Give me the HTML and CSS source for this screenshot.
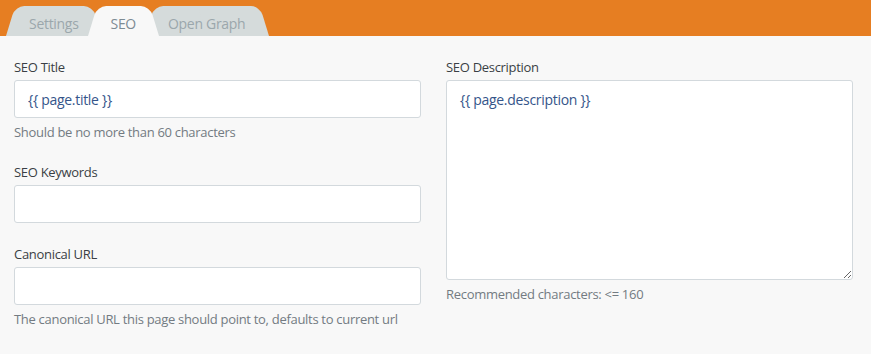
FILE: index.html
```html
<!DOCTYPE html>
<html lang="en">
<head>
    <meta charset="UTF-8">
    <title>SEO</title>
    <link rel="stylesheet" href="styles.css">
</head>
<body>
    <div class="tabs-bar">
        <div class="tab">Settings</div>
        <div class="tab active">SEO</div>
        <div class="tab">Open Graph</div>
    </div>

    <div class="form">
        <div class="column">
            <div class="form-group">
                <label>SEO Title</label>
                <input type="text" value="{{ page.title }}">
                <p class="help">Should be no more than 60 characters</p>
            </div>
            <div class="form-group">
                <label>SEO Keywords</label>
                <input type="text" value="">
            </div>
            <div class="form-group">
                <label>Canonical URL</label>
                <input type="text" value="">
                <p class="help">The canonical URL this page should point to, defaults to current url</p>
            </div>
        </div>
        <div class="column">
            <div class="form-group">
                <label>SEO Description</label>
                <textarea>{{ page.description }}</textarea>
                <p class="help">Recommended characters: &lt;= 160</p>
            </div>
        </div>

        <!-- next row, cut off by the window -->
        <div class="form-group">
            <label class="indent">Robots index</label>
        </div>
        <div class="form-group">
            <label class="indent">Robots follow</label>
        </div>
    </div>
</body>
</html>
```

FILE: styles.css
```css
body {
    font-family: 'Open Sans', 'Noto Sans', sans-serif;
    font-size: 13px;
    letter-spacing: -0.3px;
    margin: 0;
    padding: 0;
    background-color: #f8f8f8;
    color: #3a3f45;
}

/* tabs */
.tabs-bar {
    display: flex;
    align-items: flex-end;
    height: 36px;
    padding-left: 6px;
    background-color: #e67e22;
}

.tab {
    position: relative;
    z-index: 1;
    height: 30px;
    line-height: 36px;
    padding: 0 23px;
    margin-left: -14px;
    font-size: 14px;
    color: #9ba7ac;
    cursor: pointer;
}

.tab:first-child {
    margin-left: 0;
}

.tab::before,
.tab::after {
    content: '';
    position: absolute;
    z-index: -1;
    top: 0;
    bottom: 0;
    width: 50%;
    background-color: #d5dbdb;
    transform-origin: bottom;
}

.tab::before {
    left: 0;
    border-top-left-radius: 9px;
    transform: skewX(-17deg);
}

.tab::after {
    right: 0;
    border-top-right-radius: 9px;
    transform: skewX(17deg);
}

.tab.active {
    z-index: 2;
    color: #7d8b94;
}

.tab.active::before,
.tab.active::after {
    background-color: #f8f8f8;
}

/* form */
.form {
    display: grid;
    grid-template-columns: 1fr 1fr;
    column-gap: 25px;
    padding: 22px 18px 0 14px;
}

.form-group {
    display: flex;
    flex-direction: column;
    margin-bottom: 22px;
}

label {
    line-height: 18px;
    margin-bottom: 4px;
    color: #3a3f45;
}

label.indent {
    padding-left: 22px;
}

input,
textarea {
    box-sizing: border-box;
    width: 100%;
    margin: 0;
    font-family: inherit;
    font-size: 14px;
    letter-spacing: -0.3px;
    color: #35558a;
    background-color: white;
    border: 1px solid #d3d9dd;
    border-radius: 3px;
    padding: 0 13px;
    outline: none;
}

input {
    height: 38px;
}

textarea {
    height: 200px;
    padding-top: 9px;
    line-height: 19px;
    resize: vertical;
}

.help {
    margin: 5px 0 0;
    line-height: 18px;
    color: #737b82;
}
```
